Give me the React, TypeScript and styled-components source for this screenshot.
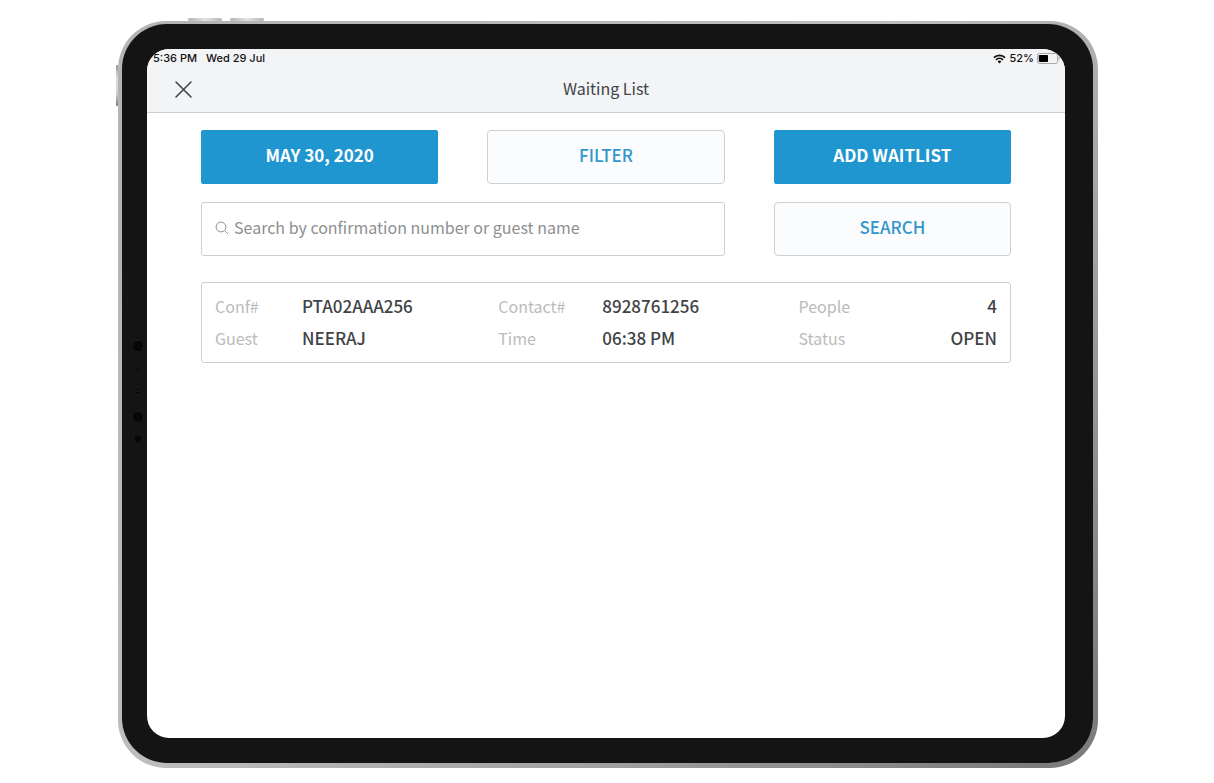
import React from "react";
import styled, { createGlobalStyle } from "styled-components";

const GlobalStyle = createGlobalStyle`
  * { box-sizing: border-box; }
  body { margin: 0; background: #fff; }
  button, input { font: inherit; }
`;

const Page = styled.div`
  min-height: 100vh;
  display: flex;
  padding: 21px 116px 15px 118px;
  font-family: "Noto Sans CJK SC", "Noto Sans", sans-serif;
  font-size: 16px;
  line-height: 24px;
  color: #3f4345;
`;

const Device = styled.div`
  position: relative;
  flex: 1;
  display: flex;
  padding: 3px 5px 5px 4px;
  border-radius: 48px;
  background: linear-gradient(135deg, #b4b4b4 0%, #bdbdbd 45%, #a2a2a2 70%, #7c7c7c 96%);
`;

const Bezel = styled.div`
  position: relative;
  flex: 1;
  display: flex;
  padding: 25px 28px 25px 25px;
  border-radius: 45px;
  background: #141414;
`;

const Screen = styled.div`
  flex: 1;
  min-width: 0;
  border-radius: 22px;
  overflow: hidden;
  background: #fff;
`;

const SideKey = styled.span<{ $vertical?: boolean; $start: number }>`
  position: absolute;
  ${(p) =>
    p.$vertical
      ? `left: -2px; top: ${p.$start}px; width: 2px; height: 41px;
         background: linear-gradient(#8d8d8d, #dcdcdc 30%, #d2d2d2 70%, #777);`
      : `top: -3px; left: ${p.$start}px; width: 34px; height: 3px;
         background: linear-gradient(90deg, #b5b5b5, #e2e2e2 50%, #b5b5b5);`}
  border-radius: 2px;
`;

const Sensors = styled.svg`
  position: absolute;
  left: 8px;
  top: 311px;
`;

const Header = styled.header`
  background: #f2f4f6;
  border-bottom: 1px solid #cdd0d1;
`;

const StatusBar = styled.div`
  display: flex;
  justify-content: space-between;
  padding: 2px 5px 0 6px;
  font: 500 11px/15px Inter, sans-serif;
  color: #111;
`;

const StatusGroup = styled.div<{ $gap: number }>`
  display: flex;
  align-items: center;
  gap: ${(p) => p.$gap}px;
`;

const TitleBar = styled.div`
  display: grid;
  grid-template-columns: 1fr auto 1fr;
  align-items: center;
  height: 46px;
  padding: 0 28px;
`;

const CloseButton = styled.button`
  display: flex;
  justify-self: start;
  padding: 0;
  border: 0;
  background: none;
  color: #3f4345;
`;

const Title = styled.h1`
  margin: 0;
  padding-bottom: 2px;
  font-size: 16px;
  font-weight: 400;
`;

const Content = styled.main`
  padding: 17px 54px;
`;

const Actions = styled.form`
  display: grid;
  grid-template-columns: repeat(3, 1fr);
  gap: 18px 49px;
`;

const ActionButton = styled.button<{ $primary?: boolean }>`
  height: 54px;
  padding: 0 12px 4px;
  border: 1px solid ${(p) => (p.$primary ? "#1f96cf" : "#cdd0d1")};
  border-radius: ${(p) => (p.$primary ? 2 : 4)}px;
  background: ${(p) => (p.$primary ? "#1f96cf" : "#fafcfd")};
  color: ${(p) => (p.$primary ? "#fff" : "#3297cc")};
  font-size: 17px;
  font-weight: ${(p) => (p.$primary ? 600 : 500)};
`;

const SearchField = styled.label`
  grid-column: span 2;
  display: flex;
  align-items: center;
  gap: 5px;
  height: 54px;
  padding: 0 13px 2px;
  border: 1px solid #cdd0d1;
  border-radius: 3px;
  color: #8d8f90;
`;

const SearchInput = styled.input`
  flex: 1;
  min-width: 0;
  padding: 0 0 2px;
  border: 0;
  outline: 0;
  background: none;
  color: #3f4345;
  &::placeholder { color: #8d8f90; opacity: 1; }
`;

const Card = styled.article`
  display: grid;
  grid-template-columns: 284fr 301fr 199fr;
  margin-top: 26px;
  padding: 7px 13px 8px;
  border: 1px solid #cdd0d1;
  border-radius: 3px;
`;

const Details = styled.dl<{ $label: number; $end?: boolean }>`
  display: grid;
  grid-template-columns: ${(p) => p.$label}px 1fr;
  grid-auto-rows: 32px;
  align-items: center;
  margin: 0;
  text-align: ${(p) => (p.$end ? "right" : "left")};
`;

const Term = styled.dt`
  color: #b9bbbc;
  text-align: left;
`;

const Value = styled.dd`
  margin: 0;
  font-size: 17px;
  font-weight: 500;
`;

const columns = [
  { label: 87, rows: [["Conf#", "PTA02AAA256"], ["Guest", "NEERAJ"]] },
  { label: 104, rows: [["Contact#", "8928761256"], ["Time", "06:38 PM"]] },
  { label: 87, end: true, rows: [["People", "4"], ["Status", "OPEN"]] },
];

const WifiIcon = () => (
  <svg width="13" height="10" viewBox="0 0 13 10" fill="none" stroke="#111" strokeWidth="1.7" aria-hidden="true">
    <path d="M.9 3.6a8 8 0 0 1 11.2 0M2.9 5.8a5.2 5.2 0 0 1 7.2 0" />
    <path d="M6.5 9.4 4.6 7.5a2.7 2.7 0 0 1 3.8 0z" fill="#111" stroke="none" />
  </svg>
);

const BatteryIcon = () => (
  <svg width="23" height="11" viewBox="0 0 23 11" aria-hidden="true">
    <rect x=".5" y=".5" width="20" height="10" rx="2" fill="none" stroke="#a5a6a7" />
    <rect x="1.8" y="2" width="9.2" height="7" rx=".8" fill="#000" />
    <path d="M22 4v3" stroke="#a5a6a7" />
  </svg>
);

export default function App() {
  return (
    <Page>
      <GlobalStyle />
      <Device>
        <SideKey $start={70} />
        <SideKey $start={112} />
        <SideKey $vertical $start={44} />
        <Bezel>
          <Sensors width="16" height="112" viewBox="0 0 16 112" aria-hidden="true">
            <g fill="#070707" stroke="#202020" strokeWidth=".7">
              <circle cx="8" cy="11" r="5.8" />
              <circle cx="8" cy="82" r="5.8" />
              <circle cx="8" cy="104" r="4.2" />
              <circle cx="8" cy="56" r="3" />
            </g>
            <circle cx="8" cy="35" r="1.5" fill="#0a0a0a" />
            <path d="M6.5 56h3" stroke="#1b3a4c" />
          </Sensors>
          <Screen>
            <Header>
              <StatusBar>
                <StatusGroup $gap={9}>
                  <span>5:36 PM</span>
                  <span>Wed 29 Jul</span>
                </StatusGroup>
                <StatusGroup $gap={3}>
                  <WifiIcon />
                  <span>52%</span>
                  <BatteryIcon />
                </StatusGroup>
              </StatusBar>
              <TitleBar>
                <CloseButton type="button" aria-label="Close">
                  <svg width="17" height="17" viewBox="0 0 17 17" stroke="currentColor" strokeWidth="1.5" strokeLinecap="round">
                    <path d="M1 1l15 15M16 1L1 16" />
                  </svg>
                </CloseButton>
                <Title>Waiting List</Title>
              </TitleBar>
            </Header>
            <Content>
              <Actions onSubmit={(e) => e.preventDefault()}>
                <ActionButton type="button" $primary>MAY 30, 2020</ActionButton>
                <ActionButton type="button">FILTER</ActionButton>
                <ActionButton type="button" $primary>ADD WAITLIST</ActionButton>
                <SearchField>
                  <svg width="14" height="14" viewBox="0 0 14 14" fill="none" stroke="currentColor" aria-hidden="true">
                    <circle cx="6" cy="6" r="4.9" />
                    <path d="M9.5 9.5l3.5 3.5" />
                  </svg>
                  <SearchInput
                    aria-label="Search by confirmation number or guest name"
                    placeholder="Search by confirmation number or guest name"
                  />
                </SearchField>
                <ActionButton type="submit">SEARCH</ActionButton>
              </Actions>
              <Card>
                {columns.map((column) => (
                  <Details key={column.rows[0][0]} $label={column.label} $end={column.end}>
                    {column.rows.map(([term, value]) => (
                      <React.Fragment key={term}>
                        <Term>{term}</Term>
                        <Value>{value}</Value>
                      </React.Fragment>
                    ))}
                  </Details>
                ))}
              </Card>
            </Content>
          </Screen>
        </Bezel>
      </Device>
    </Page>
  );
}
